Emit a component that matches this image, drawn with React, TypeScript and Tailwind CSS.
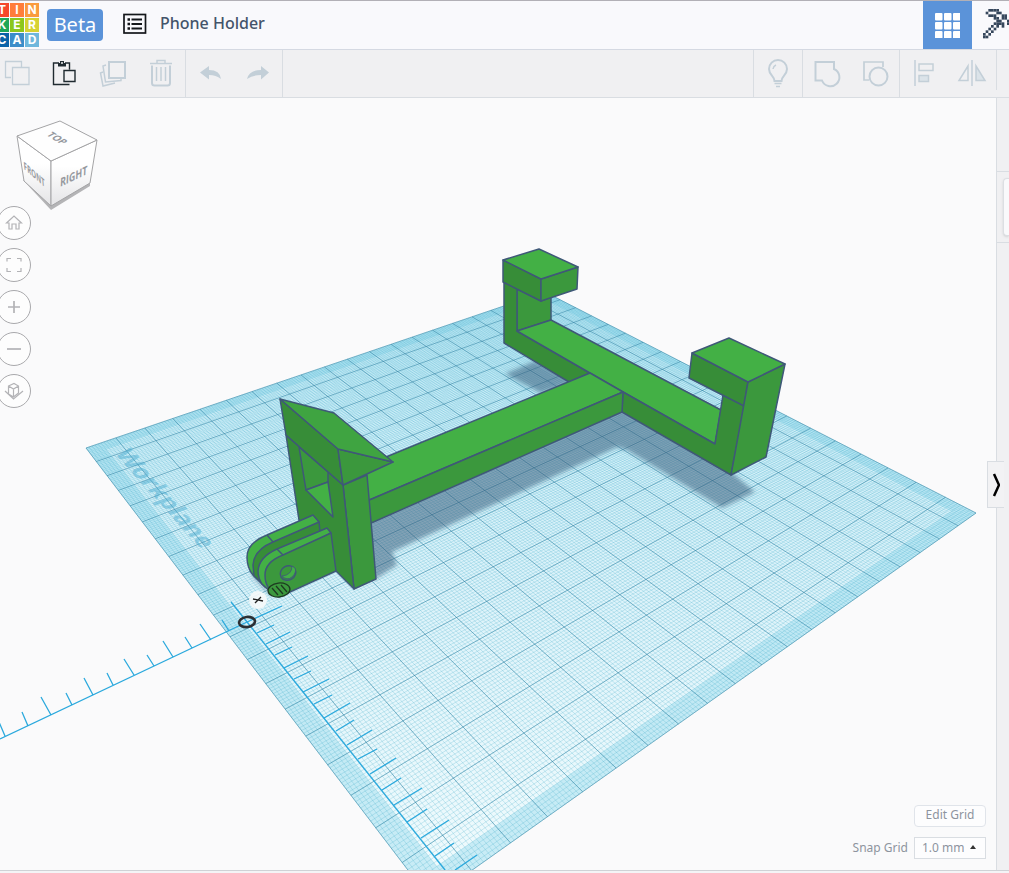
import React from 'react';

type Point = [number, number];

const EDGE = '#3f5878';
const TOP = '#43b045';
const SIDE = '#3b983d';
const DARK = '#378d38';

// Corners of the workplane on screen: left, bottom, right, top
const corners: Point[] = [[86, 448], [430.5, 899.6], [976, 513], [545, 292]];

// Perspective projection of a plane coordinate (0..1, 0..1)
const project = (u: number, v: number): Point => {
  const [p0, p1, p2, p3] = corners;
  const dx1 = p1[0] - p2[0];
  const dx2 = p3[0] - p2[0];
  const sx = p0[0] - p1[0] + p2[0] - p3[0];
  const dy1 = p1[1] - p2[1];
  const dy2 = p3[1] - p2[1];
  const sy = p0[1] - p1[1] + p2[1] - p3[1];
  const det = dx1 * dy2 - dx2 * dy1;
  const g = (sx * dy2 - dx2 * sy) / det;
  const h = (dx1 * sy - sx * dy1) / det;
  const w = 1 + g * u + h * v;
  return [
    (p0[0] + (p1[0] - p0[0] + g * p1[0]) * u + (p3[0] - p0[0] + h * p3[0]) * v) / w,
    (p0[1] + (p1[1] - p0[1] + g * p1[1]) * u + (p3[1] - p0[1] + h * p3[1]) * v) / w,
  ];
};

const toPath = (points: Point[]) => 'M' + points.map(([x, y]) => `${x.toFixed(1)} ${y.toFixed(1)}`).join('L');

const gridPath = (count: number) => {
  let d = '';
  for (let i = 0; i <= count; i++) {
    const t = i / count;
    d += toPath([project(t, 0), project(t, 1)]) + toPath([project(0, t), project(1, t)]);
  }
  return d;
};

const quad = (u0: number, v0: number, u1: number, v1: number) =>
  toPath([project(u0, v0), project(u1, v0), project(u1, v1), project(u0, v1)]) + 'Z';

const fineGrid = gridPath(200);
const coarseGrid = gridPath(20);
const planeShape = quad(0, 0, 1, 1);
const planeBorder = planeShape + quad(0.025, 0.025, 0.975, 0.975);

// Ruler ticks: [base x, base y, end x, end y]
const leftTicks = [
  [229, 631, 222, 620], [211, 640, 200, 624], [192, 648, 185, 637], [173, 657, 163, 641],
  [154, 666, 147, 655], [134, 675, 124, 659], [113, 685, 107, 673], [93, 695, 84, 678],
  [72, 705, 66, 693], [51, 715, 41, 697], [28, 726, 22, 712], [5, 736, -1, 722],
  [247, 622, 231, 602],
];
const downTicks = [
  [247, 622, 282, 606], [257, 633, 274, 625], [266, 644, 290, 632], [275, 655, 292, 647],
  [284, 668, 308, 656], [294, 679, 311, 671], [303, 692, 329, 679], [314, 704, 332, 695],
  [324, 718, 350, 703], [336, 731, 354, 720], [347, 745, 372, 730], [358, 759, 377, 749],
  [370, 774, 396, 758], [382, 790, 401, 778], [394, 805, 422, 788], [407, 822, 427, 809],
  [421, 838, 449, 820], [435, 856, 454, 843], [455, 870, 477, 855],
];
const tickPath = (ticks: number[][]) => ticks.map(([a, b, c, d]) => `M${a} ${b}L${c} ${d}`).join('');

const faces: { fill: string; points: string }[] = [
  // far hook
  { fill: SIDE, points: '517,289 541,301 551,297 551,320 517,331' },
  { fill: DARK, points: '504,282 517,289 517,331 590,373 569,382 504,343' },
  { fill: TOP, points: '517,331 551,320 721,410 715,444 623,392 590,373' },
  { fill: DARK, points: '503,260 541,279 541,301 503,282' },
  { fill: SIDE, points: '541,279 578,267 577,289 541,301' },
  { fill: TOP, points: '503,260 539,249 578,267 541,279' },
  // near hook
  { fill: DARK, points: '623,392 715,444 723,395 745,405 731,475 622,412' },
  { fill: DARK, points: '692,353 748,382 744,406 689,378' },
  { fill: SIDE, points: '748,382 785,364 766,457 731,475' },
  { fill: TOP, points: '692,353 729,338 785,364 748,382' },
  // long bar
  { fill: TOP, points: '360,468 386,457 590,373 623,392 360,504' },
  { fill: SIDE, points: '360,504 623,392 622,412 360,528' },
  // tower
  { fill: SIDE, points: '343,485 367,475 376,579 354,589' },
  { fill: DARK, points: '286,435 343,485 354,589 336,571 299,520' },
  { fill: SIDE, points: '299,447 328,472 328,482 306,490' },
  { fill: TOP, points: '306,490 328,482 333,517' },
  { fill: DARK, points: '280,399 338,449 343,485 286,435' },
  { fill: SIDE, points: '338,449 393,462 343,485' },
  { fill: '#3fa441', points: '280,399 334,413 393,462 338,449' },
];

const Workspace: React.FC = () => (
  <svg
    className="absolute inset-0 h-full w-full"
    viewBox="0 98 996 772"
    preserveAspectRatio="xMinYMin slice"
    role="img"
    aria-label="Phone holder model on the workplane"
  >
    <defs>
      <linearGradient id="plane" x1="0" y1="0" x2="0" y2="1">
        <stop offset="0" stopColor="#c9edf8" />
        <stop offset="0.5" stopColor="#ddf3fa" />
        <stop offset="1" stopColor="#f1fbfd" />
      </linearGradient>
      <filter id="soft" x="-10%" y="-10%" width="120%" height="120%">
        <feGaussianBlur stdDeviation="2" />
      </filter>
      <clipPath id="planeClip">
        <path d={planeShape} />
      </clipPath>
    </defs>

    {/* Workplane */}
    <path d={planeShape} fill="url(#plane)" />
    <path d={planeBorder} fill="#8fd8ec" fillOpacity="0.4" fillRule="evenodd" />
    <path d={fineGrid} fill="none" stroke="#3aa8c8" strokeOpacity="0.34" strokeWidth="0.7" />
    <path d={coarseGrid} fill="none" stroke="#2a7c9c" strokeOpacity="0.48" strokeWidth="1" />
    <text
      transform="matrix(.67 .74 -.95 .33 114 453)"
      className="font-['Noto_Sans',sans-serif] text-[24px] font-bold"
      fill="#4eadd0"
      fillOpacity="0.5"
    >
      Workplane
    </text>

    {/* Shadows */}
    <g fill="#365a78" fillOpacity="0.53" filter="url(#soft)" clipPath="url(#planeClip)">
      <path d="M505 374L535 361L575 382L541 393Z" />
      <path d="M366 523L622 408L731 472L755 492L722 508L627 450L617 447L392 552L397 565L374 580Z" />
      <path d="M250 575L264 590L276 597L270 570Z" fillOpacity="0.3" />
    </g>

    {/* Model */}
    <g stroke={EDGE} strokeWidth="1.5" strokeLinejoin="round">
      {faces.map((face) => (
        <polygon key={face.points} points={face.points} fill={face.fill} />
      ))}
      <path d="M313 515L267 535Q247 543 247 557Q247 568 253 575L265 587L283 555L319 530V522Z" fill={TOP} />
      <path d="M319 522L273 542Q254 550 253 565L254 576L267 588L285 560L320 532Z" fill={DARK} />
      <path d="M267 535L273 542" />
      <path d="M327 528L277 549Q259 557 258 571Q258 578 262 584L273 594L283 560L331 533Z" fill={TOP} />
      <path d="M331 533L283 555Q265 562 265 575Q265 590 279 597L336 571Z" fill={SIDE} />
      <path d="M277 549L283 555" />
      <ellipse cx="288" cy="573" rx="8" ry="7" fill={SIDE} transform="rotate(-30 288 573)" />
      <path d="M292 566Q292 575 282 576Q287 581 292 577Q297 572 295 568Z" fill={TOP} strokeWidth="0.8" />
    </g>

    {/* Ruler */}
    <g fill="none" stroke="#2ba9dd" strokeWidth="1.3">
      <path d={'M247 622L0 739' + tickPath(leftTicks)} />
      <path d={'M247 622L303 692L445 870' + tickPath(downTicks)} />
    </g>
    <circle cx="258" cy="600" r="9" fill="#f7f9fa" fillOpacity="0.9" />
    <path d="M253 599L263 601M255 603L261 597" stroke="#222" strokeWidth="1.3" />
    <ellipse cx="247" cy="622" rx="8" ry="5" fill="none" stroke="#2b2f33" strokeWidth="2.6" transform="rotate(-8 247 622)" />
    <g fill="none" stroke="#1d3a20" strokeWidth="1.3">
      <ellipse cx="279" cy="590" rx="11" ry="7" fill={SIDE} transform="rotate(-6 279 590)" />
      <path d="M272 588L278 595M276 586L283 594M281 585L287 592" />
    </g>
  </svg>
);

const ViewCube: React.FC = () => (
  <svg className="h-[108px] w-[100px] overflow-visible" viewBox="0 98 100 108" role="img" aria-label="View cube">
    <defs>
      <linearGradient id="cubeFace" x1="0" y1="0" x2="0" y2="1">
        <stop offset="0.4" stopColor="#ffffff" />
        <stop offset="1" stopColor="#e4e4e6" />
      </linearGradient>
    </defs>
    <path d="M23 180L51 210L90 186V180Z" fill="#b4b4b6" />
    <g stroke="#a4a4a6" strokeLinejoin="round">
      <path d="M17 136L51 161V206L24 181Z" fill="url(#cubeFace)" />
      <path d="M51 161L97 140L90 183L51 206Z" fill="url(#cubeFace)" />
      <path d="M17 136L60 121L97 140L51 161Z" fill="#fefefe" />
    </g>
    <g className="font-['Open_Sans',sans-serif] text-[10px] font-bold" fill="#96999e">
      <text transform="matrix(.8 .5 -.9 .5 46 135)">TOP</text>
      <text transform="matrix(.62 .54 .1 1.1 24 169)">FRONT</text>
      <text transform="matrix(.89 -.42 -.05 1.2 60 187)">RIGHT</text>
    </g>
  </svg>
);

const viewButtons: { label: string; icon: React.ReactNode }[] = [
  { label: 'Home view', icon: <path d="M7.500 16L15 9L22.500 16H20V22H17V17H13V22H10V16Z" /> },
  { label: 'Fit all in view', icon: <path d="M8 12.500V9.500H12M18 9.500H22V12.500M22 19V22.500H18M12 22.500H8V19" /> },
  { label: 'Zoom in', icon: <path d="M9 16H21M15 10V22" strokeWidth="1.700" /> },
  { label: 'Zoom out', icon: <path d="M8 16H22" strokeWidth="1.700" /> },
  {
    label: 'Switch to flat view',
    icon: <path d="M9.500 11L15 8.500L19.500 11V18L14.500 22L9.500 19ZM9.500 11L14.500 14L19.500 11M14.500 14V22M6 16L14.500 24L24 16" />,
  },
];

interface ToolProps {
  label: string;
  active?: boolean;
  divider?: boolean;
  children: React.ReactNode;
}

const Tool: React.FC<ToolProps> = ({ label, active, divider, children }) => (
  <button
    aria-label={label}
    className={`flex h-full shrink-0 justify-center pt-[7px] ${active ? 'text-[#1f2a30]' : 'text-[#c3cfd8]'} ${
      divider ? 'w-[49px] border-l border-[#d9dde2]' : 'w-12'
    }`}
  >
    <svg className="h-8 w-8" viewBox="0 0 32 32" fill="none" stroke="currentColor" strokeWidth="1.5">
      {children}
    </svg>
  </button>
);

const Toolbar: React.FC = () => (
  <div className="flex h-12 shrink-0 items-stretch justify-between border-b border-[#d9dde2] bg-[#f0f0f2]">
    <div className="-ml-[7px] flex">
      <Tool label="Copy">
        <path d="M10 20.500H4.500V4.500H20.500V10M11.500 10.500H28V27.500H11.500Z" strokeWidth="1.300" />
      </Tool>
      <Tool label="Paste" active>
        <path d="M10 6H4.500V27.500H20.500M16 6H20.500V12.500M15 13.500H26V24.500H15Z" strokeWidth="1.400" />
        <path d="M9 6H11V4H15V6H17V9.500H9Z" fill="currentColor" stroke="none" />
        <path d="M12 6H14" stroke="#f0f0f2" />
      </Tool>
      <Tool label="Duplicate">
        <path d="M12 5H28V21H12Z" strokeWidth="2" />
        <path d="M9 8L6 9L8.500 25L24 23.500V21" />
        <path d="M6 15L3.500 16L6 29L18 26" />
      </Tool>
      <Tool label="Delete">
        <path d="M5 6.500H27M12 6V3.500H20V6" />
        <path d="M7 8.500V26Q7 28.500 9.500 28.500H22.500Q25 28.500 25 26V8.500" strokeWidth="2" />
        <path d="M11.500 10V24M16 10V24M20.500 10V24" />
      </Tool>
      <Tool label="Undo" divider>
        <path d="M15 9V13Q26 13 27 22Q22 18 15 18V22.500L6 15.500Z" fill="currentColor" stroke="none" />
      </Tool>
      <Tool label="Redo">
        <path d="M19 9V13Q7 13 5 22Q11 18 19 18V22.500L27 15.500Z" fill="currentColor" stroke="none" />
      </Tool>
      <div className="border-l border-[#d9dde2]" />
    </div>
    <div className="flex pr-3">
      <Tool label="Show all" divider>
        <path d="M12.500 24C12.500 19 7 18 7 12A9 9 0 0 1 25 12C25 18 19.500 19 19.500 24Z" strokeWidth="2" />
        <path d="M11 12Q11.500 9 14 8M12.500 26.500H19.500M14 29.500H18" strokeWidth="1.500" />
      </Tool>
      <Tool label="Group" divider>
        <path d="M4.500 5H23V12A9 9 0 1 1 11 23.500H4.500Z" strokeWidth="2" />
      </Tool>
      <Tool label="Ungroup">
        <path d="M10 23H5V5H24V10" strokeWidth="1.700" />
        <circle cx="19.500" cy="19.500" r="9" strokeWidth="2" />
      </Tool>
      <Tool label="Align" divider>
        <path d="M7 3V29" />
        <path d="M11 7H25V13.500H11Z" />
        <path d="M11 18.500H20.500V24.500H11Z" fill="#dbe3e9" />
      </Tool>
      <Tool label="Mirror">
        <path d="M16 3V29" />
        <path d="M12 9V23.500H3Z" />
        <path d="M20 9V23.500H29Z" fill="#dbe3e9" />
      </Tool>
      <div className="h-10 border-l border-[#d9dde2]" />
    </div>
  </div>
);

const tiles = [
  { letter: 'T', color: 'bg-[#f4472c]' },
  { letter: 'I', color: 'bg-[#ff7d3b]' },
  { letter: 'N', color: 'bg-[#fa9b3e]' },
  { letter: 'K', color: 'bg-[#1fa659]' },
  { letter: 'E', color: 'bg-[#8cc71c]' },
  { letter: 'R', color: 'bg-[#d6d233]' },
  { letter: 'C', color: 'bg-[#0a62a9]' },
  { letter: 'A', color: 'bg-[#3b8dc9]' },
  { letter: 'D', color: 'bg-[#6fb7dc]' },
];

// Pickaxe bitmap, one character per cell
const pickaxe = [
  '..####......',
  '.#...##.....',
  '..###..##...',
  '....##.##...',
  '.....##..#..',
  '....####.#..',
  '...#.#.#..#.',
  '..#.#.....#.',
  '.#.#......#.',
  '#.#.......#.',
  '##..........',
];

const Header: React.FC = () => (
  <header className="flex h-[50px] shrink-0 items-center overflow-hidden border-t border-b border-t-[#b2b0b6] border-b-[#d5d9e2] bg-[#f9f9fc]">
    <a href="#" aria-label="Tinkercad" className="-ml-[5px] grid shrink-0 grid-cols-3 gap-px">
      {tiles.map((tile) => (
        <span
          key={tile.letter}
          className={`flex h-[14px] w-[14px] items-center justify-center font-['Inter',sans-serif] text-xs leading-[14px] font-bold text-white ${tile.color}`}
        >
          {tile.letter}
        </span>
      ))}
    </a>
    <span className="ml-2 flex h-8 w-14 shrink-0 items-center justify-center rounded bg-[#5b93d9] text-xl text-white">
      Beta
    </span>
    <button aria-label="Designs" className="ml-5 shrink-0 pb-0.5">
      <svg className="h-[22px] w-6" viewBox="0 0 24 22" fill="none" stroke="#14171a">
        <rect x="1" y="1.500" width="21.500" height="18.500" strokeWidth="1.700" />
        <path d="M8.500 6.500H19M8.500 11H19M8.500 15.500H19" strokeWidth="2" />
        <path d="M4.500 6.500H7M4.500 11H7M4.500 15.500H7" strokeWidth="2.500" />
      </svg>
    </button>
    <h1 className="ml-[13px] pb-1 text-base font-medium whitespace-nowrap text-[#44546a]">Phone Holder</h1>
    <div className="ml-auto flex h-full shrink-0">
      <button aria-label="Blocks view" className="flex w-[49px] items-center justify-center bg-[#5b93d9]">
        <svg className="h-[25px] w-[25px]" viewBox="0 0 25 25" fill="#ffffff">
          {[0, 9, 18].map((y) => [0, 9, 18].map((x) => <rect key={`${x}-${y}`} x={x} y={y} width="7.500" height="7.500" rx="1" />))}
        </svg>
      </button>
      <button aria-label="Minecraft view" className="flex w-[37px] items-center overflow-hidden pl-[11px]">
        <svg className="h-8 w-8 shrink-0" viewBox="0 0 12 12" fill="#36475c">
          {pickaxe.map((row, y) =>
            row.split('').map((cell, x) => (cell === '#' ? <rect key={`${x}-${y}`} x={x} y={y} width="1" height="1" /> : null))
          )}
        </svg>
      </button>
    </div>
  </header>
);

const SidePanel: React.FC = () => (
  <aside className="relative w-[13px] shrink-0 border-l border-[#d9dde2] bg-[#f0f0f2]">
    <div className="mt-[73px] h-[72px] overflow-hidden border-y border-[#d9dde2] py-1.5 pl-1.5">
      <div className="h-full rounded-l border border-r-0 border-[#dcdfe3] bg-[#f9f9fb] shadow-sm" />
    </div>
    <button
      aria-label="Collapse panel"
      className="absolute top-[363px] -left-[10px] flex h-[47px] w-[17px] items-center justify-center border border-r-0 border-[#d9dde2] bg-[#f2f2f4]"
    >
      <svg className="h-6 w-2" viewBox="0 0 8 24" fill="none" stroke="#000000" strokeWidth="2.500">
        <path d="M2 1L7 12L2 23" />
      </svg>
    </button>
  </aside>
);

const App: React.FC = () => {
  return (
    <div className="flex h-screen flex-col overflow-hidden bg-[#f0f0f2] font-['Noto_Sans',sans-serif]">
      <Header />
      <Toolbar />
      <div className="flex min-h-0 flex-1">
        <main className="relative flex min-w-0 flex-1 overflow-hidden bg-[#fafafb]">
          <Workspace />
          <div className="relative flex flex-col items-start">
            <ViewCube />
            <div className="-ml-[3px] flex flex-col gap-2">
              {viewButtons.map((button) => (
                <button
                  key={button.label}
                  aria-label={button.label}
                  className="h-[34px] w-[34px] rounded-full border border-[#a9a9ac] bg-[#fdfdfd]"
                >
                  <svg className="h-8 w-8" viewBox="-1 0 32 32" fill="none" stroke="#b3b3b6" strokeWidth="1.200">
                    {button.icon}
                  </svg>
                </button>
              ))}
            </div>
          </div>
          <div className="relative mt-auto mr-[10px] mb-[11px] ml-auto flex flex-col items-end gap-[10px] text-xs text-[#8d949e]">
            <button className="h-[22px] w-[72px] rounded-sm border border-[#e0e4ea] bg-[#fdfdfe] pb-0.5 leading-4">Edit Grid</button>
            <div className="flex items-center gap-1.5">
              <label htmlFor="snap-grid">Snap Grid</label>
              <div className="relative">
                <select
                  id="snap-grid"
                  className="block h-[22px] w-[72px] appearance-none border border-[#d9dde2] bg-[#fdfdfe] pl-[7px] leading-5"
                >
                  <option>1.0 mm</option>
                </select>
                <svg className="pointer-events-none absolute top-2 right-[10px] h-1 w-1.5" viewBox="0 0 6 4" fill="#333333">
                  <path d="M0 4L3 0L6 4Z" />
                </svg>
              </div>
            </div>
          </div>
        </main>
        <SidePanel />
      </div>
      <footer className="h-[3px] shrink-0 border-t border-[#d0d2d6] bg-[#f4f4f6]" />
    </div>
  );
};

export default App;
